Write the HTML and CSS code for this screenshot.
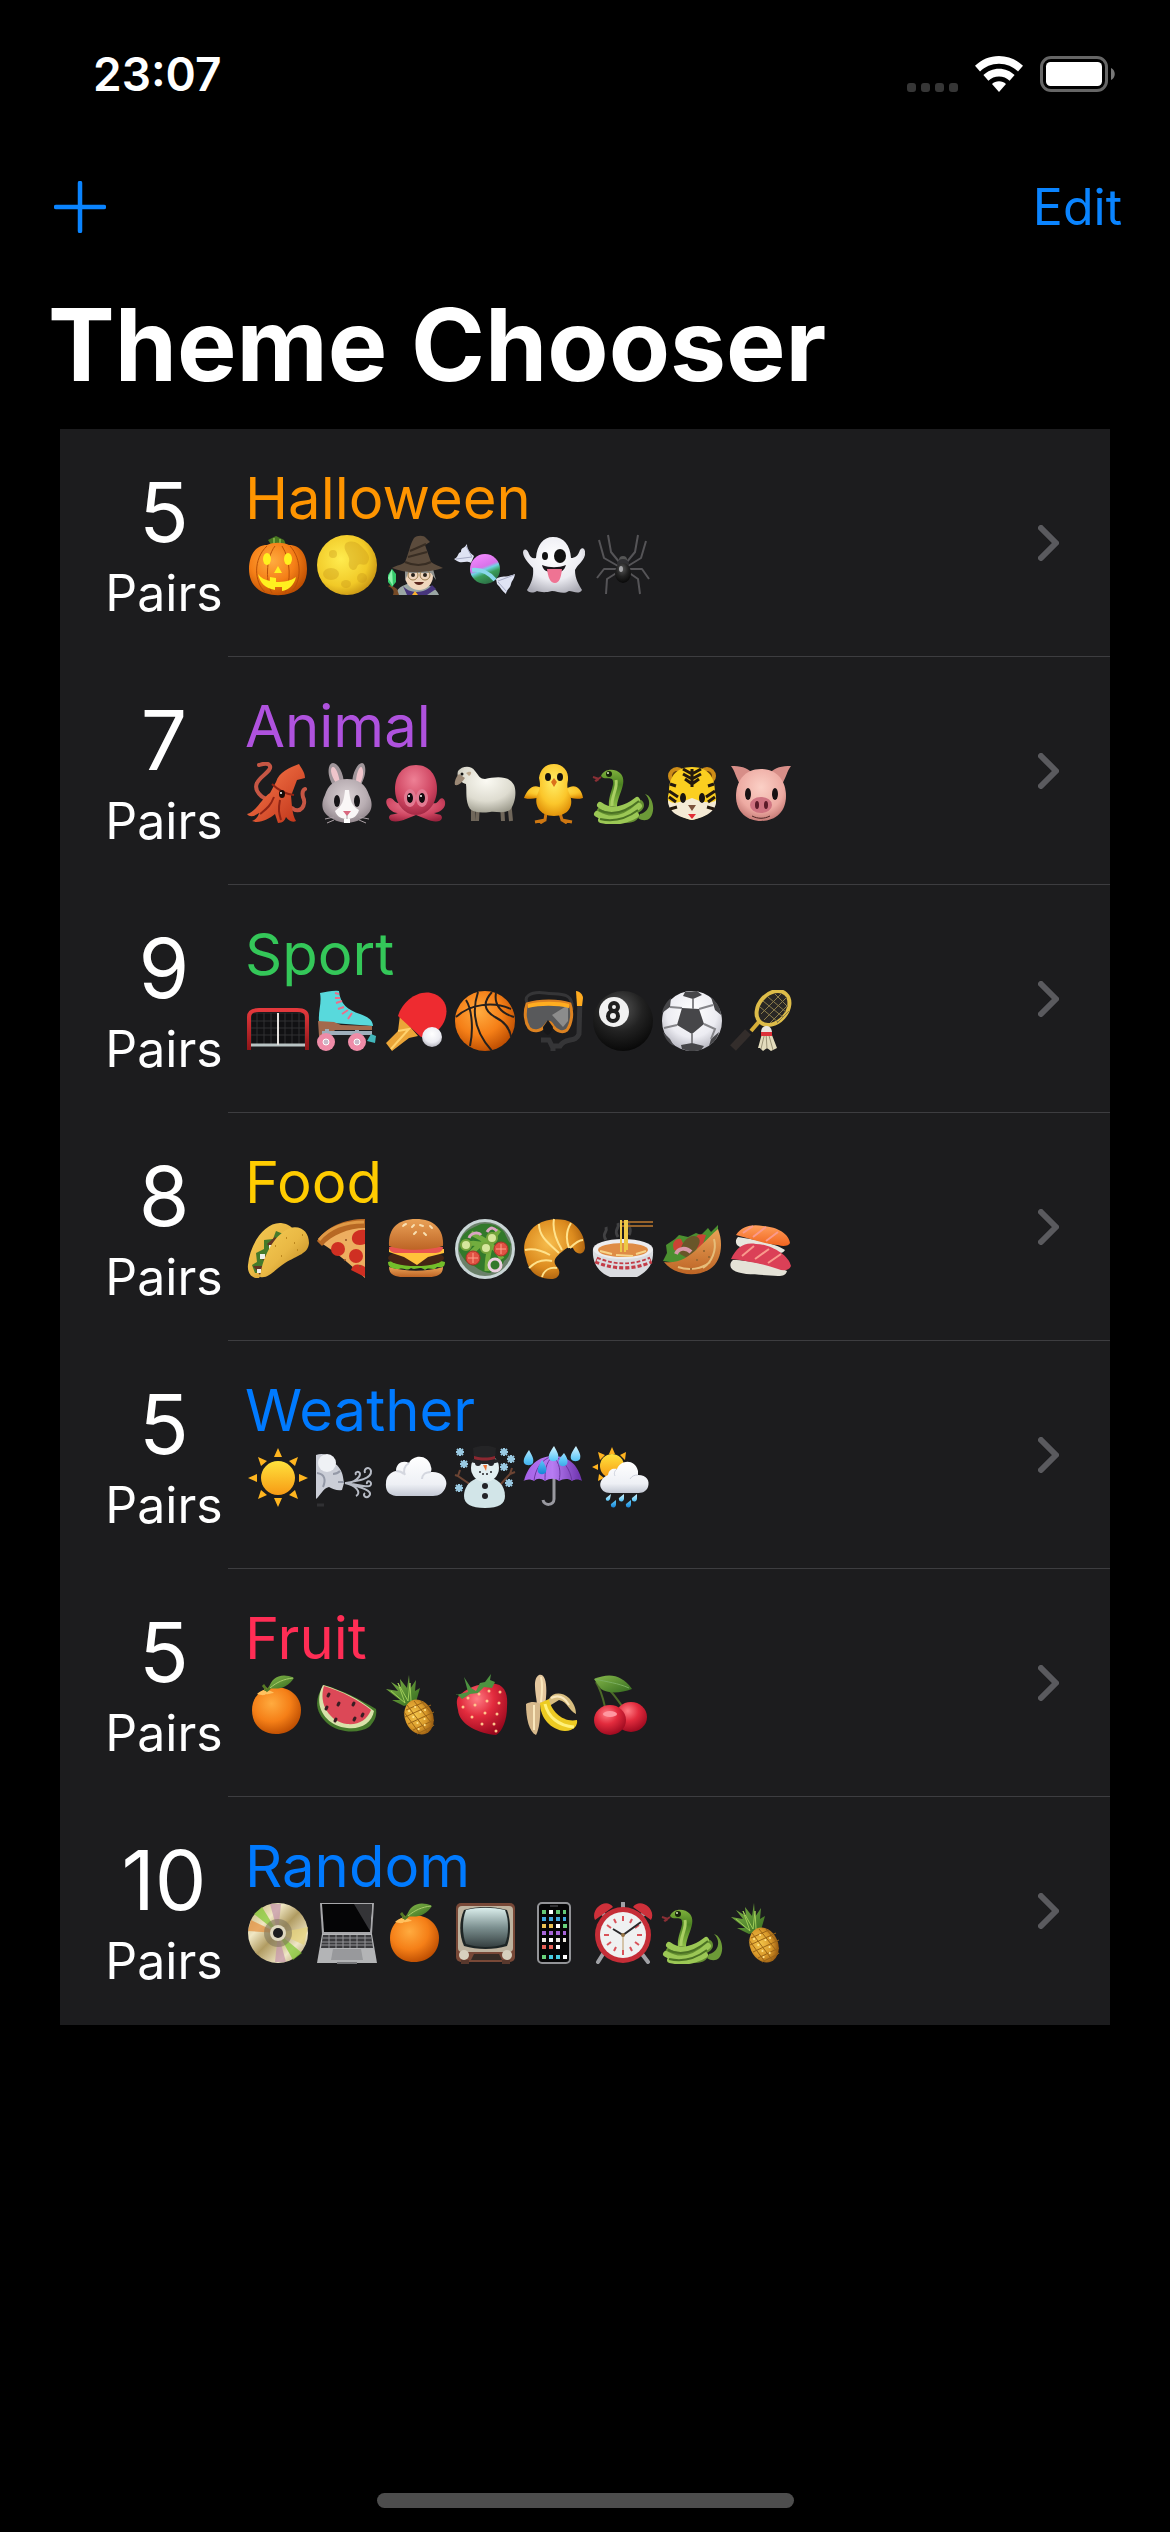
FILE: index.html
```html
<!DOCTYPE html>
<html lang="en">
<head>
<meta charset="utf-8">
<meta name="viewport" content="width=device-width, initial-scale=1">
<title>Theme Chooser</title>
<link rel="stylesheet" href="styles.css">
</head>
<body>
<svg class="defs" width="0" height="0" aria-hidden="true">
  <defs>
    <radialGradient id="g-orange" cx=".4" cy=".35" r=".7"><stop offset="0" stop-color="#ffab3f"/><stop offset=".55" stop-color="#f57f17"/><stop offset="1" stop-color="#b94a00"/></radialGradient>
    <radialGradient id="g-moon" cx=".4" cy=".4" r=".65"><stop offset="0" stop-color="#ffec4f"/><stop offset=".7" stop-color="#f1c927"/><stop offset="1" stop-color="#c79413"/></radialGradient>
    <radialGradient id="g-white" cx=".5" cy=".35" r=".7"><stop offset="0" stop-color="#fff"/><stop offset=".6" stop-color="#ececf2"/><stop offset="1" stop-color="#aaaab4"/></radialGradient>
    <linearGradient id="g-cloud" x1="0" y1="0" x2="0" y2="1"><stop offset="0" stop-color="#fff"/><stop offset=".7" stop-color="#eef0f5"/><stop offset="1" stop-color="#c3c8d4"/></linearGradient>
    <radialGradient id="g-black" cx=".45" cy=".3" r=".75"><stop offset="0" stop-color="#555"/><stop offset=".5" stop-color="#222"/><stop offset="1" stop-color="#050505"/></radialGradient>
    <linearGradient id="g-candy" x1=".2" y1="0" x2=".6" y2="1"><stop offset="0" stop-color="#f58cff"/><stop offset=".45" stop-color="#d873ea"/><stop offset=".55" stop-color="#6fd4e4"/><stop offset=".7" stop-color="#3a9c5a"/><stop offset="1" stop-color="#2b6f45"/></linearGradient>
    <linearGradient id="g-squid" x1="0" y1="0" x2="1" y2="1"><stop offset="0" stop-color="#ff8050"/><stop offset="1" stop-color="#bd3117"/></linearGradient>
    <radialGradient id="g-rabbit" cx=".5" cy=".4" r=".65"><stop offset="0" stop-color="#d9d0d3"/><stop offset=".6" stop-color="#b9aeb3"/><stop offset="1" stop-color="#8b8086"/></radialGradient>
    <radialGradient id="g-octo" cx=".45" cy=".3" r=".75"><stop offset="0" stop-color="#ee8095"/><stop offset=".6" stop-color="#d04763"/><stop offset="1" stop-color="#9c233f"/></radialGradient>
    <radialGradient id="g-wool" cx=".5" cy=".3" r=".75"><stop offset="0" stop-color="#fbfaf3"/><stop offset=".6" stop-color="#dedcd0"/><stop offset="1" stop-color="#9c9a8c"/></radialGradient>
    <radialGradient id="g-chick" cx=".5" cy=".35" r=".7"><stop offset="0" stop-color="#ffee66"/><stop offset=".6" stop-color="#fbc62b"/><stop offset="1" stop-color="#dd8a05"/></radialGradient>
    <linearGradient id="g-snake" x1="0" y1="0" x2="0" y2="1"><stop offset="0" stop-color="#7fb13c"/><stop offset=".4" stop-color="#4c8222"/><stop offset="1" stop-color="#8fbf47"/></linearGradient>
    <radialGradient id="g-pig" cx=".5" cy=".35" r=".7"><stop offset="0" stop-color="#fbd0c6"/><stop offset=".65" stop-color="#edaaa2"/><stop offset="1" stop-color="#bb6f6b"/></radialGradient>
    <linearGradient id="g-shell" x1="0" y1="0" x2="1" y2="1"><stop offset="0" stop-color="#f6cc55"/><stop offset=".5" stop-color="#e9b844"/><stop offset="1" stop-color="#b67d18"/></linearGradient>
    <linearGradient id="g-bun" x1="0" y1="0" x2="0" y2="1"><stop offset="0" stop-color="#eaa257"/><stop offset="1" stop-color="#bd6425"/></linearGradient>
    <radialGradient id="g-croissant" cx=".4" cy=".4" r=".7"><stop offset="0" stop-color="#f7bd4d"/><stop offset=".6" stop-color="#dc8b1e"/><stop offset="1" stop-color="#9a520a"/></radialGradient>
    <linearGradient id="g-sun" x1="0" y1="0" x2="0" y2="1"><stop offset="0" stop-color="#ffe23d"/><stop offset="1" stop-color="#f79a14"/></linearGradient>
    <linearGradient id="g-drop" x1="0" y1="0" x2="0" y2="1"><stop offset="0" stop-color="#d5f4ff"/><stop offset=".5" stop-color="#5cc6f7"/><stop offset="1" stop-color="#1583d6"/></linearGradient>
    <linearGradient id="g-umbrella" x1="0" y1="0" x2="1" y2="0"><stop offset="0" stop-color="#a45fe6"/><stop offset=".5" stop-color="#b77cf2"/><stop offset="1" stop-color="#6b31ab"/></linearGradient>
    <radialGradient id="g-red" cx=".4" cy=".3" r=".75"><stop offset="0" stop-color="#ff7d84"/><stop offset=".45" stop-color="#e22b3d"/><stop offset="1" stop-color="#97071d"/></radialGradient>
    <linearGradient id="g-leaf" x1="0" y1="0" x2="1" y2="1"><stop offset="0" stop-color="#86b84a"/><stop offset="1" stop-color="#346b1f"/></linearGradient>
    <radialGradient id="g-pine" cx=".4" cy=".4" r=".65"><stop offset="0" stop-color="#f3c54a"/><stop offset=".6" stop-color="#d9992a"/><stop offset="1" stop-color="#94560f"/></radialGradient>
    <linearGradient id="g-disc" x1="0" y1="0" x2="1" y2="1"><stop offset="0" stop-color="#b9a768"/><stop offset=".3" stop-color="#f0e7c4"/><stop offset=".5" stop-color="#b19c62"/><stop offset=".75" stop-color="#efe6c6"/><stop offset="1" stop-color="#9c8950"/></linearGradient>
    <linearGradient id="g-screen" x1="0" y1="0" x2="0" y2="1"><stop offset="0" stop-color="#dcefed"/><stop offset=".5" stop-color="#7d9191"/><stop offset="1" stop-color="#353f40"/></linearGradient>
    <linearGradient id="g-salmon" x1="0" y1="0" x2="0" y2="1"><stop offset="0" stop-color="#ff9f5c"/><stop offset="1" stop-color="#f0641f"/></linearGradient>
    <linearGradient id="g-net" x1="0" y1="0" x2="0" y2="1"><stop offset="0" stop-color="#e3383c"/><stop offset="1" stop-color="#8e1518"/></linearGradient>

    <symbol id="i-tangerine" viewBox="0 0 62 62">
      <path d="M5 36C5 22 16 13 29 13s25 9 25 23-10 24-25 24S5 50 5 36z" fill="url(#g-orange)"/>
      <path d="M10 20c4-4 8-3 9-7 2 4 6 4 8 6-4 0-6 2-8 1-2 2-5 1-9 0z" fill="#ffc15f"/>
      <path d="M19 17c0-3-2-5-3-6m3 6c5-3 6-7 9-9" fill="none" stroke="#567a25" stroke-width="3"/>
      <path d="M22 14C24 4 34-2 47 4c-6 9-14 12-25 10z" fill="url(#g-leaf)"/>
      <path d="M23 14C30 8 37 5 46 4" fill="none" stroke="#a9cc6b"/>
    </symbol>
    <symbol id="i-snake" viewBox="0 0 62 62">
      <path d="M9 15 3 19m4-2-6-2m6 2-3 2" stroke="#8a2f35" stroke-width="2" fill="none"/>
      <path d="M48 52c10-2 12-14 5-20 8 2 11 17 5 24-3 3-8 3-12 0z" fill="#6c9a37"/>
      <path d="M9 14C12 6 24 6 29 12c7 9-4 22-4 33l-8-1c-1-12 7-22 3-27-3-2-8 1-11-3z" fill="url(#g-snake)"/>
      <path d="M24 18c2 8-5 17-4 26" fill="none" stroke="#a9cf63" stroke-width="3"/>
      <path d="M10 44c9 4 20 3 30-5 4-4 12-2 12 4 0 4-3 6-6 8 3 6-4 10-12 10-14 1-27 0-29-8-2-5 2-9 5-9z" fill="#648f31"/>
      <path d="M8 43c12 9 27 3 37-5M5 52c13 8 28 5 42-8M9 58c12 3 25 1 35-5" stroke="#9bc755" stroke-width="6" stroke-linecap="round" fill="none"/>
      <path d="M7 48c14 7 28 1 40-9M8 57c13 3 26 0 38-9" stroke="#4b7224" stroke-width="2" fill="none"/>
      <circle cx="17" cy="12" r="3" fill="#15200a"/><circle cx="16" cy="11" r="1" fill="#d9ebbb"/>
    </symbol>
    <symbol id="i-pineapple" viewBox="0 0 62 62">
      <path d="M19 32 7 26l8 0L1 15l12 2-7-9 10 6L15 5l7 9 2-13 1 14 6-9-1 11 5-3-4 14z" fill="url(#g-leaf)"/>
      <path d="M6 17 20 29 13 9l10 18 2-18 1 18" stroke="#9fcc58" fill="none"/>
      <ellipse cx="34" cy="43" rx="14" ry="18" transform="rotate(-24 34 43)" fill="url(#g-pine)"/>
      <path d="m21 36 18-8M20 43l26-12M23 50l26-12M28 56l21-10M32 60l16-8M22 31l21 28M29 27l20 25M19 38l16 22M36 27l12 14" stroke="#9b6517" fill="none"/>
      <path d="M24 37h.1m6-4h.1m-2 10h.1m7-5h.1m-3 11h.1m7-4h.1m-6 10h.1m6-4h.1M40 36h.1" stroke="#ffe38a" stroke-width="2" stroke-linecap="round"/>
    </symbol>
  </defs>
</svg>

<div class="screen">
  <div class="status">
    <time class="clock">23:07</time>
    <div class="indicators">
      <svg class="signal" viewBox="0 0 51 9" role="img" aria-label="No signal"><g fill="#363636"><rect width="9" height="9" rx="3"/><rect x="14" width="9" height="9" rx="3"/><rect x="28" width="9" height="9" rx="3"/><rect x="42" width="9" height="9" rx="3"/></g></svg>
      <svg class="wifi" viewBox="0 0 48 36" role="img" aria-label="Wi-Fi"><path fill="#fff" d="M24 0C14.700 0 6.300 3.700 0 9.800L5 15.500C10 10.700 16.500 7.800 24 7.800s14 2.900 19 7.700L48 9.800C41.700 3.700 33.300 0 24 0zM24 12.800c-6 0-11.500 2.400-15.600 6.300L13.400 24.700c2.800-2.600 6.500-4.200 10.600-4.200s7.800 1.600 10.600 4.200l5-5.600C35.500 15.200 30 12.800 24 12.800zM24 25.300c-2.700 0-5.200 1-7 2.800L24 36l7-7.900C29.200 26.300 26.700 25.300 24 25.300z"/></svg>
      <svg class="battery" viewBox="0 0 76 36" role="img" aria-label="Battery full"><rect x="1.500" y="1.500" width="65" height="33" rx="9.500" fill="none" stroke="#666" stroke-width="3"/><rect x="6" y="6" width="56" height="24" rx="4.500" fill="#fff"/><path d="M71 12c5 2 5 10 0 12z" fill="#777"/></svg>
    </div>
  </div>

  <nav class="toolbar">
    <button class="tool" type="button" aria-label="Add theme"><svg class="plus" viewBox="0 0 52 52"><path d="M26 2v48M2 26h48" stroke="currentColor" stroke-width="4.500" stroke-linecap="round"/></svg></button>
    <button class="tool" type="button">Edit</button>
  </nav>

  <main>
    <h1 class="heading">Theme Chooser</h1>
    <ul class="themes">
      <li><a class="theme halloween" href="#halloween">
        <span class="count"><span class="number">5</span><span class="unit">Pairs</span></span>
        <span class="details">
          <span class="summary"><span class="name">Halloween</span>
          <span class="emojis">
            <svg viewBox="0 0 62 62" role="img" aria-label="Pumpkin"><path d="M24 16c1-6-2-8-3-10l8-4 8 4c2 3 1 6 4 9z" fill="#487721"/><path d="M27 4v10m6-9v9" stroke="#79a942" stroke-width="2"/><path d="M20 11c6-3 16-3 22 0 12 0 18 10 18 24s-7 21-16 24c-9 3-17 3-26 0C9 56 2 48 2 35s6-24 18-24z" fill="url(#g-orange)"/><path d="M20 12C6 25 7 48 18 58M28 12C18 25 19 50 25 59M35 12c9 14 9 37 3 47M43 12c12 13 12 36 1 46" fill="none" stroke="#b94f07"/><ellipse cx="20" cy="25" rx="4" ry="6" fill="#fff01f"/><ellipse cx="41" cy="25" rx="4" ry="6" fill="#fff01f"/><path d="m31 32-4 7h8zM11 40c3 4 7 6 12 7v-4l6 1v4c8 0 15-1 20-5-2 9-8 13-14 14v-4h-7v3C18 54 13 49 11 40z" fill="#fff01f"/></svg>
            <svg viewBox="0 0 62 62" role="img" aria-label="Full moon"><circle cx="31" cy="31" r="30" fill="url(#g-moon)"/><g fill="#c69418" opacity=".35"><path d="M30 9c8-4 13 1 17 5s8 8 5 14-9-1-11 5-10 2-8-5-8-12-3-19z"/><ellipse cx="15" cy="40" rx="8" ry="6"/><ellipse cx="30" cy="50" rx="5" ry="4"/><circle cx="46" cy="44" r="5"/><circle cx="17" cy="20" r="4"/></g></svg>
            <svg viewBox="0 0 62 62" role="img" aria-label="Mage"><path d="M10 61c3-9 11-12 21-12s20 4 23 12z" fill="#9ba7a5"/><path d="M18 52c6 8 22 8 29-1l4 4-9 6H22z" fill="#46357c"/><path d="m30 57 3 4h-6z" fill="#f9b32c"/><ellipse cx="34" cy="42" rx="14" ry="14" fill="#f0d6bd"/><path d="M20 35c8-4 20-4 28 0l3 11-5-7H23l-3 8z" fill="#8f928f"/><g fill="none" stroke="#997c4d"><circle cx="28" cy="41" r="5"/><circle cx="40" cy="41" r="5"/></g><circle cx="28" cy="41" r="2" fill="#29231c"/><circle cx="40" cy="41" r="2" fill="#29231c"/><path d="M29 48h10c-2 4-8 4-10 0z" fill="#5a251d"/><path d="M7 34c5-3 10-3 13-6 4-9 5-18 9-24 3-3 10-3 12 0l4 4-5 3 6 17c4 3 9 4 12 6-15 5-37 6-51 0z" fill="#5b4b3c"/><path d="M20 28c9 4 18 4 26 0M25 17l16-7M23 23l19-5" stroke="#382d23" stroke-width="2" fill="none"/><path d="M8 61c2-5-1-7-5-9l3-1 6 4 2 6z" fill="#754925"/><path d="m7 35 4 5v8l-4 5-4-5v-7z" fill="#35c96b"/><path d="m7 35 1 17-5-8z" fill="#8bf3ac"/></svg>
            <svg viewBox="0 0 62 62" role="img" aria-label="Candy"><path d="M13 10c0 5 2 8 7 12l-3 7c-5-3-9 1-14-2L0 25c5-2 3-6 7-7 0-5 3-3 6-8zM42 45c5-4 10-1 19-5-1 6-3 6-4 10-1 5-4 5-5 10-4-3-5-6-9-10z" fill="#dfe3f3"/><path d="m2 25 16-2-6-11m32 35 16-6m-16 7 9 10" stroke="#a6aac4" fill="none"/><circle cx="31" cy="35" r="15" fill="url(#g-candy)"/><path d="M18 36c9-1 17 3 23 10" stroke="#8ad8ec" stroke-width="4" fill="none"/></svg>
            <svg viewBox="0 0 62 62" role="img" aria-label="Ghost"><path d="M30 3c11 0 17 8 18 21 4 0 7-2 9-8 3-4 6 0 5 5-2 7-7 9-10 15 0 9 4 15 7 20-3 5-9 1-13 1-6 4-11 0-17 0-7 2-12 1-15 0-5 3-9 1-10-1C8 50 11 43 10 34 5 29 0 23 0 18c1-5 5-2 6 2 2 4 4 5 7 4C14 11 20 3 30 3z" fill="url(#g-white)"/><ellipse cx="22" cy="22" rx="3" ry="4" fill="#111"/><ellipse cx="37" cy="22" rx="6" ry="7" fill="#111"/><path d="M19 31c8 3 16 3 24 0-2 6-5 7-7 7H26c-4-1-6-3-7-7z" fill="#191519"/><path d="M24 35h15c-1 9-3 14-7 14-5 0-7-6-8-14z" fill="#ef7393"/></svg>
            <svg viewBox="0 0 62 62" role="img" aria-label="Spider"><g fill="none" stroke="#555457" stroke-width="2" stroke-linejoin="round"><path d="M28 29 19 18 16 1M26 32 12 24 7 6M26 35l-14 0-7 9M26 38l-11 7-1 15M34 29l9-11 3-17M36 32l13-8 5-17M36 35l14 0 7 10M36 38l10 7 2 15"/></g><circle cx="31" cy="26" r="4" fill="#555"/><ellipse cx="31" cy="30" rx="6" ry="5" fill="#303033"/><ellipse cx="31" cy="39" rx="8" ry="10" fill="url(#g-black)"/><ellipse cx="29" cy="35" rx="2" ry="3" fill="#a7a7aa"/></svg>
          </span></span>
          <svg class="chevron" viewBox="0 0 21 36" aria-hidden="true"><path d="m3 3 15 15L3 33"/></svg>
        </span></a></li>

      <li><a class="theme animal" href="#animal">
        <span class="count"><span class="number">7</span><span class="unit">Pairs</span></span>
        <span class="details">
          <span class="summary"><span class="name">Animal</span>
          <span class="emojis">
            <svg viewBox="0 0 62 62" role="img" aria-label="Squid"><path d="M26 38C13 38 7 27 10 21c3-7 15-12 13-17-2-4-7-2-11-1M45 46c8 7 15-3 11-11-1-4 0-7 2-8" fill="none" stroke="#c65644" stroke-width="4" stroke-linecap="round"/><path d="M52 2c2 4 6 8 6 14l-8 2-6 16c1 9 1 18 5 25-4 2-8-1-10-4-1 3-3 6-8 6l-3-9C22 57 12 62 5 59c4-1 7-6 7-8-4 3-9 5-12 1 9-2 15-16 23-21l6-11C32 10 42 6 52 2z" fill="url(#g-squid)"/><path d="M25 22c7 7 13 10 22 11m-20 2c-4 10-8 12-14 17M33 38c-2 10-1 13 1 20" fill="none" stroke="#8f2415" stroke-width="2"/><ellipse cx="35" cy="32" rx="3" ry="4" fill="#180c09"/><circle cx="34" cy="31" r="1" fill="#fff"/></svg>
            <svg viewBox="0 0 62 62" role="img" aria-label="Rabbit"><path d="M18 25C10 13 12 1 17 1s11 10 11 22M36 23C36 10 42 1 46 1s6 12-3 25" fill="#a0969b"/><path d="M20 21C14 12 14 5 17 5s6 8 7 16M40 21c0-9 3-16 5-16s4 8-1 17" fill="#efc5cb"/><path d="M31 17c12 0 19 6 22 16 6 12 1 20-8 24-8 5-20 5-28 0C8 53 3 45 9 33c3-10 10-16 22-16z" fill="url(#g-rabbit)"/><path d="M29 28h4c1 11 3 16 10 20-2 7-7 9-12 9s-10-2-12-8c7-5 9-10 10-21z" fill="#faf7f7"/><ellipse cx="21" cy="39" rx="3" ry="6" fill="#161417"/><ellipse cx="41" cy="39" rx="3" ry="6" fill="#161417"/><path d="M27 49h8l-4 5z" fill="#d9687f"/><path d="M31 53v4m-13-2-9 2m9 1-7 3m32-6 10 2m-10 1 7 3" stroke="#aaa0a5"/><path d="M28 57h6v4h-6z" fill="#fff"/></svg>
            <svg viewBox="0 0 62 62" role="img" aria-label="Octopus"><path d="M16 41C9 42 9 36 5 36S0 40 3 45c3 5 8 6 10 6-4 2-9 0-9 5 1 5 11 4 17 1l10-4 10 4c6 3 15 4 16-1 0-5-5-3-8-5 5 0 10-4 11-8 1-6-3-8-5-6-3 3-2 5-9 4z" fill="url(#g-octo)"/><path d="M31 3c14 0 21 11 21 24 0 14-9 26-21 26S10 41 10 27C10 14 17 3 31 3z" fill="url(#g-octo)"/><g fill="#e27991"><ellipse cx="25" cy="36" rx="6" ry="9"/><ellipse cx="37" cy="36" rx="6" ry="9"/></g><g fill="#110b0e"><ellipse cx="25" cy="36" rx="3" ry="5"/><ellipse cx="37" cy="36" rx="3" ry="5"/></g><circle cx="24" cy="34" r="1" fill="#fff"/><circle cx="36" cy="34" r="1" fill="#fff"/></svg>
            <svg viewBox="0 0 62 62" role="img" aria-label="Ewe"><path d="M19 42v17m5-17-1 17m25-17 1 17m6-21 2 21" stroke="#6f665a" stroke-width="4"/><path d="M4 9c4-5 13-6 17 0 4 5 5 8 10 8 10-2 24-4 29 6 3 7 1 19-4 25-7 4-14 1-20 2-8 1-15 1-20-3-5-8-3-17-4-25-5-1-10-6-8-13z" fill="url(#g-wool)"/><path d="M5 12c-3 3-5 8-4 11 4 1 7-3 10-7z" fill="#9b8875"/><path d="M12 11c5-3 7 0 3 3z" fill="#bea98f"/><circle cx="8" cy="12" r="1.500" fill="#111"/></svg>
            <svg viewBox="0 0 62 62" role="img" aria-label="Baby chick"><path d="m23 51-1 7-10 2m10-2-5 3m20-10 2 7 10 2m-10-2 5 3" stroke="#ce7712" stroke-width="3" fill="none"/><path d="M20 27C10 20 4 28 1 36c8 2 14 0 17-2m25-7c10-7 16 1 17 9-7 2-13 0-16-2" fill="url(#g-chick)"/><path d="M31 2c9 0 15 7 14 16-1 5-1 7 1 13 6 12 0 23-15 23S10 42 15 31c3-7 2-10 1-15C17 8 22 2 31 2z" fill="url(#g-chick)"/><ellipse cx="25" cy="15" rx="3" ry="4" fill="#16110d"/><ellipse cx="37" cy="15" rx="3" ry="4" fill="#16110d"/><path d="m31 16 3 4-3 5-3-5z" fill="#dc711b"/></svg>
            <svg viewBox="0 0 62 62" role="img" aria-label="Snake"><use href="#i-snake"/></svg>
            <svg viewBox="0 0 62 62" role="img" aria-label="Tiger face"><circle cx="16" cy="14" r="9" fill="#cd8c17"/><circle cx="46" cy="14" r="9" fill="#cd8c17"/><circle cx="16" cy="14" r="5" fill="#68400b"/><circle cx="46" cy="14" r="5" fill="#68400b"/><path d="M31 5c17 0 23 11 23 25 5 16-7 24-23 28C15 54 3 45 8 30 8 16 14 5 31 5z" fill="#fbcf20"/><path d="M7 38c5 5 11 2 16 1l8-3 8 3c6 1 12 3 16-1 1 11-10 17-24 20C17 55 7 50 7 38z" fill="#f4ead5"/><path d="M31 7v18m0-13-9-5m9 10-9-5m9 10-7-5m7-5 9-5m-9 10 9-5m-9 10 7-5M8 29l9 6m-9 0 7 5m39-11-9 6m9 0-7 5M9 22l6 2m38-2-6 2M9 47l7-2m37 2-7-2" stroke="#24190e" stroke-width="3" fill="none"/><ellipse cx="22" cy="36" rx="3" ry="5" fill="#191411"/><ellipse cx="41" cy="36" rx="3" ry="5" fill="#191411"/><path d="M27 43h8l-4 6z" fill="#7b513d"/><path d="M27 52h8l-4 5z" fill="#e12c34"/></svg>
            <svg viewBox="0 0 62 62" role="img" aria-label="Pig face"><path d="M1 4c9 0 16 1 21 7L10 22C6 16 5 9 1 4zm60 0c-9 0-16 1-21 7l12 11c4-6 5-13 9-18z" fill="#d78e88"/><path d="M31 7c17 0 25 13 25 27 0 16-11 25-25 25S6 50 6 34C6 20 14 7 31 7z" fill="url(#g-pig)"/><ellipse cx="18" cy="32" rx="3" ry="6" fill="#171113"/><ellipse cx="45" cy="32" rx="3" ry="6" fill="#171113"/><ellipse cx="31" cy="43" rx="11" ry="8" fill="#cf7381"/><ellipse cx="27" cy="43" rx="2" ry="4" fill="#5b1b29"/><ellipse cx="36" cy="43" rx="2" ry="4" fill="#5b1b29"/><path d="M22 54c6 3 12 3 18 0" stroke="#4c2424" stroke-width="1" fill="none"/></svg>
          </span></span>
          <svg class="chevron" viewBox="0 0 21 36" aria-hidden="true"><path d="m3 3 15 15L3 33"/></svg>
        </span></a></li>

      <li><a class="theme sport" href="#sport">
        <span class="count"><span class="number">9</span><span class="unit">Pairs</span></span>
        <span class="details">
          <span class="summary"><span class="name">Sport</span>
          <span class="emojis">
            <svg viewBox="0 0 62 62" role="img" aria-label="Goal net"><path d="M5 24h52v32H5z" fill="#111113"/><path d="M10 23v32m7-32v32m7-32v32m14-32v32m7-32v32m7-32v32M4 31h54M4 38h54M4 45h54" stroke="#303033"/><path d="M4 55h54" stroke="#b9c4c4" stroke-width="3"/><path d="M31 23v32" stroke="#e5e2df" stroke-width="2"/><path d="M2 60V27c0-5 4-7 10-7h38c6 0 10 2 10 7v33" stroke="url(#g-net)" stroke-width="4" fill="none"/></svg>
            <svg viewBox="0 0 62 62" role="img" aria-label="Roller skate"><path d="M4 3c7-1 13-3 19-2 1 13 9 19 21 23 9 3 13 7 13 12L3 32C2 21 6 13 4 3z" fill="#58d9dc"/><path d="m2 31 16 1 7 3 31 1v4H19l-5 6H3z" fill="#a3694d"/><path d="M6 43h50M11 39v10m30-9v8" stroke="#9faebb" stroke-width="4"/><path d="m55 44 5 2-1 7-8-2z" fill="#41b6bb"/><g fill="#ef8ca8"><circle cx="10" cy="52" r="9"/><circle cx="41" cy="52" r="9"/></g><g fill="#c9b9c8" stroke="#fff"><circle cx="10" cy="52" r="3"/><circle cx="41" cy="52" r="3"/></g><path d="m19 3 4 1m-4 4 5 0m-4 5 6-2m-4 8 6-2m-2 7 6-4m0 9 4-6" stroke="#e9708b" stroke-width="2"/></svg>
            <svg viewBox="0 0 62 62" role="img" aria-label="Ping pong"><path d="m15 25 18 21-9 2L7 61 1 53l12-12z" fill="#eba538"/><path d="m13 41 11-2L6 59" fill="none" stroke="#ffd16c" stroke-width="2"/><path d="M13 26C17 12 32 0 46 3c14 3 19 16 13 29-4 8-12 15-23 15z" fill="#ee2b30"/><circle cx="47" cy="47" r="10" fill="url(#g-white)"/></svg>
            <svg viewBox="0 0 62 62" role="img" aria-label="Basketball"><circle cx="31" cy="31" r="30" fill="url(#g-orange)"/><path d="M2 27c14-13 37-16 55-8M24 2c-6 18-5 38 14 59M12 10c7 11 7 33 4 46M38 2c-9 10-9 18 3 25 10 5 15 12 16 20M42 3c-2 11 4 20 18 24" fill="none" stroke="#26201d" stroke-width="2"/></svg>
            <svg viewBox="0 0 62 62" role="img" aria-label="Diving mask"><path d="M7 16C-3 7 8 1 22 3s25-1 27 11v6" stroke="#353537" stroke-width="3" fill="none"/><path d="m57 9-1 35c-3 9-14 3-19 12h-8l-3-6h-8m12 5v6" stroke="#353537" stroke-width="5" fill="none"/><path d="M53 1c4 0 7 4 7 7l-1 8h-5z" fill="#ffab20"/><path d="M4 14c12-4 32-4 43 0 3 8 2 19-3 26-4 3-10 2-14-4-3-5-5-5-8 0-5 6-12 6-16 2-4-6-5-16-2-24z" fill="#58595b" stroke="#dc8221" stroke-width="3"/><path d="m29 25 16-10v16l-5 6z" fill="#8c8c8c"/><path d="M5 14c12-3 30-3 41 0v4c-12-3-29-3-41 0z" fill="#ffad20"/><path d="m20 37 5-7 5 7c-1 4-2 6-5 8-3-1-5-4-5-8z" fill="#171719"/></svg>
            <svg viewBox="0 0 62 62" role="img" aria-label="Eight ball"><circle cx="31" cy="31" r="30" fill="url(#g-black)"/><circle cx="22" cy="22" r="15" fill="#f1f1f1"/><g fill="none" stroke="#202020" stroke-width="4"><ellipse cx="22" cy="17" rx="4" ry="4"/><ellipse cx="21" cy="26" rx="5" ry="5"/></g></svg>
            <svg viewBox="0 0 62 62" role="img" aria-label="Soccer ball"><circle cx="31" cy="31" r="30" fill="url(#g-white)"/><path d="m21 18 17 1 5 15-12 10-15-9zM24 2l12-1 5 4-9 4-10-3zM50 7c7 6 10 13 10 18l-6-5zM1 23c1-6 5-12 9-15l-1 9zM2 42l7 7 4 7C7 53 4 48 2 42zM20 55l11-2 12 3-3 4c-8 2-14 1-19-1zM50 49l8-7c-2 7-5 10-10 14z" fill="#464649"/><path d="m21 18-12-1m29 2 14-4M43 34l11 5-4 10m-19-5v9m-15-18L3 38m29-29v10" fill="none" stroke="#858589" stroke-width="2"/></svg>
            <svg viewBox="0 0 62 62" role="img" aria-label="Badminton"><path d="m21 41 12-14" stroke="#d6ae37" stroke-width="4"/><path d="M18 42 3 58" stroke="#332d2b" stroke-width="8"/><ellipse cx="43" cy="18" rx="14" ry="19" transform="rotate(42 43 18)" fill="#292725" stroke="#ddbc49" stroke-width="4"/><path d="m30 17 18 15M33 11l20 16M38 7l18 15M45 4l13 13M31 24 51 4M34 30 57 7M40 33l18-18M47 33l12-12" stroke="#8b7c4b"/><path d="m28 58 5-18h7l7 18-6 3-4-3-4 3-3-3z" fill="#e3dcbd"/><path d="m31 59 4-17m2 17-1-17m7 18-5-18" stroke="#9c9478"/><path d="M31 43c0-6 3-7 6-7s5 3 5 7z" fill="#e9e7e2"/><path d="M31 42h11v4H31z" fill="#dd323a"/></svg>
          </span></span>
          <svg class="chevron" viewBox="0 0 21 36" aria-hidden="true"><path d="m3 3 15 15L3 33"/></svg>
        </span></a></li>

      <li><a class="theme food" href="#food">
        <span class="count"><span class="number">8</span><span class="unit">Pairs</span></span>
        <span class="details">
          <span class="summary"><span class="name">Food</span>
          <span class="emojis">
            <svg viewBox="0 0 62 62" role="img" aria-label="Taco"><path d="M1 47C3 25 18 4 34 5c8 1 13 5 12 9L12 60C5 61 0 55 1 47z" fill="url(#g-shell)"/><path d="m8 55-3-8 5-3-1-9 8-4 0-9 9-1 3-8 10 4-20 38z" fill="#447a2b"/><path d="m6 48 7 9 8-11-6-5 10-10-5-5 8-7 5 4-13 25" fill="#613524"/><path d="M13 36h5v5h-5zm9-9h5v5h-5zm-3 17h5v4h-5zm-9 7h4v4h-4z" fill="#eef0eb"/><path d="M13 59C16 37 28 16 43 10c12-3 19 5 19 15-1 11-11 12-24 20-10 6-16 16-25 14z" fill="url(#g-shell)"/><path d="M28 28h1m10-8h1m7 5h1M34 38h1m15-6h1m4-15h1" stroke="#bd881e" stroke-width="2"/></svg>
            <svg viewBox="0 0 62 62" role="img" aria-label="Pizza"><path d="M5 25C15 14 31 7 49 6v54C35 47 20 34 5 25z" fill="#edae60"/><path d="M1 23C10 9 28 1 49 1v9C32 10 16 17 6 28z" fill="#b76824"/><path d="M3 22C13 10 29 4 48 4" stroke="#df9946" stroke-width="3" fill="none"/><path d="M35 52c2-6 7-7 14-3v10z" fill="#cf2f22"/><g fill="#cf2f22"><circle cx="22" cy="31" r="7"/><circle cx="40" cy="38" r="7"/><path d="M49 12v14c-8 3-14-1-13-7 1-5 6-8 13-7z"/></g><g fill="#925026"><circle cx="30" cy="22" r="1"/><circle cx="29" cy="42" r="1"/><circle cx="44" cy="48" r="1"/></g></svg>
            <svg viewBox="0 0 62 62" role="img" aria-label="Hamburger"><path d="M4 49c18 5 36 5 54 0 0 7-5 10-14 10H18C9 59 4 56 4 49z" fill="url(#g-bun)"/><path d="M3 44c16-5 40-5 57 0 0 5-3 6-8 5-4 5-7-1-12 3-6-5-9 1-14-2-5 4-6-1-12 1-6 0-11-1-11-7z" fill="#73be2a"/><ellipse cx="31" cy="40" rx="28" ry="8" fill="#442515"/><path d="M4 31h55v4L43 39l-11 8-13-8-15-5z" fill="#ffc13a"/><path d="M4 29h54c0 5-5 6-9 6H13c-6 0-9-2-9-6z" fill="#e95450"/><path d="M4 28C3 10 13 1 31 1s28 10 27 27c-16 5-40 5-54 0z" fill="url(#g-bun)"/><path d="m18 8 3-2m6 3 2-2m6 0 3 1m7 0 2 2m-18 6 2-2m8 1 2 2m-22-10 2-1" stroke="#f8dfb1" stroke-width="2" stroke-linecap="round"/></svg>
            <svg viewBox="0 0 62 62" role="img" aria-label="Green salad"><circle cx="31" cy="31" r="30" fill="#c9d5d6"/><circle cx="31" cy="31" r="27" fill="#6a8069"/><path d="M10 16c6-6 11-7 17-10 8-1 15 0 20 5 5 3 5 10 10 15-2 5 1 11-7 17-2 7-9 8-14 12-7 0-13-5-16-7-7-1-11-8-15-15 1-6 0-12 5-17z" fill="#32792b"/><path d="M14 40c6-10 12-14 22-18M17 15c12 6 23 11 31 26M33 53c0-16 3-30 12-41M7 28c9-4 18-3 24 0" stroke="#72ad3e" stroke-width="5" fill="none"/><path d="M15 20c2-6 10-6 12-3m6-3c4-6 7-4 10-1" stroke="#dba5c4" stroke-width="3" fill="none"/><g fill="#e05243" stroke="#a93128"><circle cx="19" cy="40" r="7"/><circle cx="47" cy="31" r="7"/></g><path d="m19 35v10m-5-5h10m23-14v10m-5-5h10" stroke="#ffa28d"/><g fill="#d6e69c" stroke="#75a43c" stroke-width="2"><circle cx="12" cy="27" r="5"/><circle cx="32" cy="30" r="5"/><circle cx="38" cy="20" r="5"/></g><circle cx="41" cy="47" r="6" fill="none" stroke="#ead0df" stroke-width="3"/></svg>
            <svg viewBox="0 0 62 62" role="img" aria-label="Croissant"><path d="M3 21C8 6 24-1 42 2c12 3 20 15 20 28-1 7-8 7-11 2-2-5-6-3-11 1-9 7-11 11-5 17 3 5 1 11-7 11C13 61 5 52 3 40c-3-8-2-14 0-19z" fill="url(#g-croissant)"/><path d="M2 32c8-2 16 0 25 5M16 6c0 12 8 18 20 29M31 1c-2 11 2 21 8 31M48 5c-5 8-5 17-2 25M60 22c-5 0-9 4-13 8M6 50c7-7 15-9 23-7M19 59c2-7 8-10 15-9" fill="none" stroke="#ffe28b" stroke-width="2"/></svg>
            <svg viewBox="0 0 62 62" role="img" aria-label="Noodles"><path d="M14 22c-5-7 2-7 0-13m12 10c-5-8 2-8 0-14m11 12c4-6-2-9 0-13" stroke="#414143" stroke-width="3" fill="none"/><path d="M29 3h32v2H29zm0 4h32v2H29z" fill="#96622b"/><path d="M1 31h60c1 15-5 22-16 28H18C5 54 0 43 1 31z" fill="#dadce0"/><ellipse cx="31" cy="31" rx="30" ry="10" fill="#ececef"/><ellipse cx="31" cy="32" rx="25" ry="7" fill="#df8c46"/><path d="M29 2v32m4-32v32m2-32v30" stroke="#edc947" stroke-width="2"/><path d="m8 33 12 3m4 1 17 1m3-2 10-3" stroke="#f7d58b" stroke-width="2"/><path d="M4 42c19 8 37 8 55 0" stroke="#c33c47" stroke-width="7" fill="none" stroke-dasharray="4 2"/><path d="M5 42c18 7 36 7 53 0" stroke="#dadce0" stroke-width="2" fill="none"/></svg>
            <svg viewBox="0 0 62 62" role="img" aria-label="Stuffed flatbread"><path d="m2 43 4-8-1-8 9-6 4-4 9 2 8-4 5 2 7-7 3 4 7-7v15L22 46z" fill="#4b9030"/><path d="M13 32c-3-8 2-12 7-11l7 15zM34 26c0-9 3-11 11-9l-7 21z" fill="#cc4334"/><path d="M19 36c0-10 7-18 14-18 7 1 7 6 3 12l-8 11z" fill="#695629"/><path d="M15 36c2-6 10-7 15-2" stroke="#d898a8" stroke-width="4" fill="none"/><path d="M57 11c6 15 3 33-8 40-14 9-36 6-46-7 14 2 25-5 34-14C45 23 51 16 57 11z" fill="url(#g-bun)"/><path d="M53 21c3 11-2 23-11 29M17 49c11 4 24 2 32-5" fill="none" stroke="#e6bd7a" stroke-width="2"/><path d="M35 42h2m5-9h2m3 6h2M29 51h2" stroke="#9e6830" stroke-width="2"/></svg>
            <svg viewBox="0 0 62 62" role="img" aria-label="Sushi"><path d="M8 19c14 2 37 6 47 13-2 4-8 4-13 2-14 2-29-2-35-7-2-3-1-6 1-8z" fill="#e7e6dd"/><path d="M6 17C12 8 22 6 33 8c15 1 26 8 27 17-1 3-7 4-12 2-13-1-30-7-42-10z" fill="url(#g-salmon)"/><path d="M3 42c17 0 43 6 54 11-1 4-4 5-9 5-17-2-36 0-45-6-4-3-3-8 0-10z" fill="#e4e2d7"/><path d="M1 41C7 29 14 24 26 26c14 0 33 11 35 22-2 5-8 5-13 3-14-5-30-8-47-10z" fill="#db4057"/><path d="m13 15 10-7m0 11 13-10m0 14 12-9m-36 24 12-10m1 13 14-10m-1 14 13-9" stroke="#f99a8d" stroke-width="2"/></svg>
          </span></span>
          <svg class="chevron" viewBox="0 0 21 36" aria-hidden="true"><path d="m3 3 15 15L3 33"/></svg>
        </span></a></li>

      <li><a class="theme weather" href="#weather">
        <span class="count"><span class="number">5</span><span class="unit">Pairs</span></span>
        <span class="details">
          <span class="summary"><span class="name">Weather</span>
          <span class="emojis">
            <svg viewBox="0 0 62 62" role="img" aria-label="Sun"><path d="m31 2 4 9h-8zM51 11l-3 9-6-5zM61 32l-9 4v-8zM51 53l-9-4 6-5zM31 61l-4-9h8zM11 53l3-9 6 5zM1 32l9-4v8zM11 11l9 4-6 5z" fill="#ffb51f"/><circle cx="31" cy="32" r="17" fill="url(#g-sun)"/></svg>
            <svg viewBox="0 0 62 62" role="img" aria-label="Wind face"><path d="M0 9c9-3 17 2 18 8 5 3 8 8 9 14l1 6-2 7c-5 1-9-1-13-3-6 1-8 8-13 12z" fill="#cbced7"/><circle cx="11" cy="17" r="9" fill="#eff1f5"/><path d="M17 28c2 0 5-1 7-3M1 27c8 1 9 7 6 14m15-5h6" fill="none" stroke="#9499a7" stroke-width="2"/><path d="M29 37c10 0 15-6 15-9s-6-3-4 1M29 37c13-2 27-4 26-12-1-5-8-3-6 2M29 37c13 1 27 7 26 0-1-3-5-2-4 1M29 37c16 4 29 8 24 13-3 3-7-1-4-3M29 37c11 2 17 10 11 13" fill="none" stroke="#b7bbc5" stroke-width="2"/><path d="M1 59h7" stroke="#303033" stroke-width="3"/></svg>
            <svg viewBox="0 0 62 62" role="img" aria-label="Cloud"><path d="M11 25c0-8 7-11 13-8 4-9 20-9 22 4 1 2 0 4 0 5 11-1 17 7 15 14-2 7-7 10-13 10H14C5 50 0 46 1 37c0-6 4-11 10-12z" fill="url(#g-cloud)"/><path d="M24 17c-5 3-6 8-4 12m26-3c-7 0-9 4-9 7M11 25c3 0 6 1 8 3" fill="none" stroke="#d4d7df" stroke-width="2"/></svg>
            <svg viewBox="0 0 62 62" role="img" aria-label="Snowman"><path d="m17 39-13-9 2-6m-2 6-3-1m45 10 10-11 2-6m-2 6 5-2" fill="none" stroke="#6c4433" stroke-width="2"/><path d="M31 31c13 0 20 9 20 19 0 8-6 12-20 12S10 58 10 50c0-10 8-19 21-19z" fill="#d2e5e8"/><circle cx="31" cy="22" r="14" fill="#e3eff1"/><path d="M19 2c8-3 16-3 23 0l-1 11 6 2c-6 4-26 4-32 0l5-2z" fill="#242426"/><path d="M20 10c8 2 14 2 21 0v3c-8 2-14 2-21 0z" fill="#8b2730"/><g fill="#232327"><circle cx="24" cy="17" r="3"/><circle cx="37" cy="17" r="3"/><circle cx="31" cy="40" r="3"/><circle cx="31" cy="50" r="3"/><circle cx="26" cy="26" r="1"/><circle cx="29" cy="28" r="1"/><circle cx="33" cy="28" r="1"/><circle cx="37" cy="26" r="1"/></g><path d="m29 19 4 0-1 6z" fill="#ed7435"/><g stroke="#9acae3" stroke-width="2"><path d="M6 2v8M2 6h8M3 3l6 6m0-6L3 9M10 14v8m-4-4h8m-7-3 6 6m0-6-6 6M5 38v8m-4-4h8m-7-3 6 6m0-6-6 6M50 2v8m-4-4h8m-7-3 6 6m0-6-6 6M57 9v8m-4-4h8m-7-3 6 6m0-6-6 6M50 17v8m-4-4h8m-7-3 6 6m0-6-6 6M55 33v8m-4-4h8m-7-3 6 6m0-6-6 6"/></g></svg>
            <svg viewBox="0 0 62 62" role="img" aria-label="Umbrella with rain"><path d="M31 32v21c0 7-10 7-11 1" fill="none" stroke="#9999a0" stroke-width="3"/><path d="M1 35C5 19 16 10 30 10c15 0 25 8 29 25-3-2-7-2-10 0-4-3-9-2-13 0-4-3-9-3-14 0-4-3-8-3-11 0-3-2-7-2-11 0z" fill="url(#g-umbrella)"/><path d="M30 10c-8 7-8 16-8 25m8-25c7 7 8 16 6 25M30 10C18 13 12 24 11 35m19-25c11 4 17 13 19 25" fill="none" stroke="#6a37a0"/><g fill="url(#g-drop)"><path d="M6 4c4 7 5 9 4 13-2 3-7 3-9 0-1-4 1-7 5-13zM31 0c4 7 5 9 4 13-2 3-7 3-9 0-1-4 1-7 5-13zM53 0c4 7 5 9 4 13-2 3-7 3-9 0-1-4 1-7 5-13zM19 14c4 6 5 9 4 12-2 3-6 3-8 0-1-4 1-6 4-12zM41 7c4 6 4 8 3 11-2 3-6 3-8 0-1-4 1-6 5-11z"/></g></svg>
            <svg viewBox="0 0 62 62" role="img" aria-label="Sun behind rain cloud"><path d="m20 1 3 7h-6zM34 6l-1 8-5-5zM6 6l7 3-5 5zM0 21l6-3v6zM6 35l1-7 5 4z" fill="#ffb31f"/><circle cx="20" cy="20" r="12" fill="url(#g-sun)"/><path d="M16 29c1-6 5-7 9-6 3-9 18-11 21 2v4c9 0 12 6 10 12-2 5-6 6-11 6H18C7 47 4 34 16 29z" fill="url(#g-cloud)"/><path d="M25 23c-3 2-3 5-2 7m23-1c-4 0-6 1-8 4" fill="none" stroke="#ccd0dc"/><g fill="url(#g-drop)"><path d="m19 48-5 4c-1 3 3 4 4 1zM32 48l-5 4c-1 4 4 5 5 1zM45 48l-5 4c-1 4 4 5 5 1zM24 54l-5 4c-1 4 4 5 5 1zM39 54l-5 4c-1 4 4 5 5 1z"/></g></svg>
          </span></span>
          <svg class="chevron" viewBox="0 0 21 36" aria-hidden="true"><path d="m3 3 15 15L3 33"/></svg>
        </span></a></li>

      <li><a class="theme fruit" href="#fruit">
        <span class="count"><span class="number">5</span><span class="unit">Pairs</span></span>
        <span class="details">
          <span class="summary"><span class="name">Fruit</span>
          <span class="emojis">
            <svg viewBox="0 0 62 62" role="img" aria-label="Tangerine"><use href="#i-tangerine"/></svg>
            <svg viewBox="0 0 62 62" role="img" aria-label="Watermelon"><path d="M8 11c20 6 35 14 52 24 1 7-1 12-7 18-10 7-31 6-42-4S-3 26 8 11z" fill="#477a2c"/><path d="M7 11c20 6 36 14 51 26-2 12-14 19-27 17C10 52-4 32 7 11z" fill="#d9e2aa"/><path d="M8 12c19 6 33 13 47 24-4 10-12 15-24 14C14 48 2 30 8 12z" fill="#dc4857"/><path d="m13 20-1 2m-1 11-1 2m13-6-1 2m16-2-1 2m-17 14-1 2m20-3-1 2m9-6-1 2" stroke="#381d22" stroke-width="3" stroke-linecap="round"/></svg>
            <svg viewBox="0 0 62 62" role="img" aria-label="Pineapple"><use href="#i-pineapple"/></svg>
            <svg viewBox="0 0 62 62" role="img" aria-label="Strawberry"><path d="M4 23C13 13 28 8 42 10c10 2 12 12 11 23 0 12-4 24-11 28-16-1-37-10-38-25-1-5-2-9 0-13z" fill="url(#g-red)"/><path d="m3 20 5 5 8-5 8-1 6-6 8 1 3-6-5-2 1-6-6 8-5 1-4 8-5-3-7-11 4 15-12 3z" fill="#4d9340"/><g fill="#ffc58c"><circle cx="14" cy="24" r="1.500"/><circle cx="25" cy="20" r="1.500"/><circle cx="35" cy="17" r="1.500"/><circle cx="46" cy="18" r="1.500"/><circle cx="9" cy="33" r="1.500"/><circle cx="21" cy="31" r="1.500"/><circle cx="33" cy="27" r="1.500"/><circle cx="45" cy="29" r="1.500"/><circle cx="18" cy="43" r="1.500"/><circle cx="31" cy="39" r="1.500"/><circle cx="43" cy="40" r="1.500"/><circle cx="28" cy="50" r="1.500"/><circle cx="40" cy="50" r="1.500"/><circle cx="42" cy="57" r="1.500"/></g></svg>
            <svg viewBox="0 0 62 62" role="img" aria-label="Banana"><path d="M26 25c4-7 13-7 20-1 5 5 7 11 7 16-7-3-8-12-17-14l-13 8z" fill="#d8bd80"/><path d="M14 30c-1-10-5-25 2-29 7-2 9 12 6 31z" fill="#e4c79e"/><path d="m17 29 9-4c2 12 14 24 28 21 1 5-3 11-12 11C28 56 17 44 17 29z" fill="#edcb22"/><path d="M22 30c3 13 14 22 29 23" fill="none" stroke="#fff17a" stroke-width="3"/><path d="M3 30c5-3 12-2 14 0 1 12-1 26-4 31C6 58 3 44 3 30z" fill="#d7b98c"/><path d="M18 3c2 8 1 17 0 25M11 31v25M28 24c8-4 14 0 18 7" fill="none" stroke="#fae8bd" stroke-width="2"/></svg>
            <svg viewBox="0 0 62 62" role="img" aria-label="Cherries"><path d="M4 8c5 8 7 16 9 25M12 10c8 8 14 16 20 25" fill="none" stroke="#4c6a28" stroke-width="2"/><path d="M2 5c15-6 27-5 38 10-11 4-24 5-31 0z" fill="url(#g-leaf)"/><path d="M3 5c12 3 23 4 34 9" fill="none" stroke="#7aae5f"/><ellipse cx="39" cy="43" rx="16" ry="15" fill="url(#g-red)"/><ellipse cx="18" cy="46" rx="16" ry="15" fill="url(#g-red)"/><ellipse cx="18" cy="40" rx="7" ry="3" fill="#ff98a1"/></svg>
          </span></span>
          <svg class="chevron" viewBox="0 0 21 36" aria-hidden="true"><path d="m3 3 15 15L3 33"/></svg>
        </span></a></li>

      <li><a class="theme random" href="#random">
        <span class="count"><span class="number">10</span><span class="unit">Pairs</span></span>
        <span class="details">
          <span class="summary"><span class="name">Random</span>
          <span class="emojis">
            <svg viewBox="0 0 62 62" role="img" aria-label="DVD"><circle cx="31" cy="31" r="30" fill="url(#g-disc)"/><g opacity=".7"><path d="M31 31 7 12 15 5z" fill="#80c931"/><path d="m31 31 24 20-9 7z" fill="#80c931"/><path d="m31 31-8-29h11z" fill="#c595ac"/><path d="m31 31 8 29H28z" fill="#c595ac"/><path d="M31 31 1 29l3-11z" fill="#e48e3c"/><path d="m31 31 30-6-4 18z" fill="#e6d37a"/></g><circle cx="31" cy="31" r="14" fill="#81765a" opacity=".6"/><circle cx="31" cy="31" r="8" fill="#dfd8bf"/><circle cx="31" cy="31" r="5" fill="#1c1c1e"/></svg>
            <svg viewBox="0 0 62 62" role="img" aria-label="Laptop"><path d="M4 1h54l-2 31H6z" fill="#a7a7aa"/><path d="M6 2h50l-2 28H8z" fill="#050506"/><path d="M38 2h18l-2 27z" fill="#343437"/><path d="m6 32 50 0 5 29H1z" fill="#b3b4b6"/><path d="M7 33h48l2 13H5z" fill="#3a3a3d"/><path d="M7 36h48M6 40h50M5 43h52M13 33v13m7-13v13m7-13v13m7-13v13m7-13v13m8-13v13" stroke="#939397"/><path d="M17 47h28l2 11H15z" fill="#98999c"/><path d="M21 60h20v2H21z" fill="#77787b"/></svg>
            <svg viewBox="0 0 62 62" role="img" aria-label="Tangerine"><use href="#i-tangerine"/></svg>
            <svg viewBox="0 0 62 62" role="img" aria-label="Television"><rect x="2" y="1" width="59" height="59" rx="5" fill="#784837"/><path d="M7 58h8v4H7zm41 0h8v4h-8z" fill="#58382d"/><rect x="4" y="4" width="55" height="46" rx="4" fill="#beb39f"/><path d="M10 8c13-4 29-4 43 0 4 10 4 26 0 36-13 4-30 4-43 0-5-11-5-25 0-36z" fill="#1e2525"/><path d="M12 8c12-3 26-3 39 0 4 9 4 25 0 34-12 4-27 4-39 0-4-9-4-25 0-34z" fill="url(#g-screen)"/><path d="M20 52h25l3 6H17z" fill="#362b25"/><circle cx="10" cy="53" r="5" fill="#d7d0be"/><circle cx="53" cy="53" r="5" fill="#d7d0be"/></svg>
            <svg viewBox="0 0 62 62" role="img" aria-label="Mobile phone"><rect x="15" y="1" width="32" height="60" rx="4" fill="#050506" stroke="#929397" stroke-width="2"/><path d="M27 4h8" stroke="#303033" stroke-width="2"/><g stroke-width="4" stroke-dasharray="4 3"><path stroke="#66ca77" d="M19 10h24"/><path stroke="#42aae1" d="M19 17h24"/><path stroke="#eac153" d="M19 24h24"/><path stroke="#a765d8" d="M19 31h24"/><path stroke="#f0ece3" d="M19 38h24"/><path stroke="#e96157" d="M19 45h18"/><path stroke="#48cde2" d="M19 55h24"/></g><path d="M26 10h4m3 14h4M26 38h4m3 7h4M40 55h4" stroke="#fff" stroke-width="4"/><path d="M19 55h4M40 24h4" stroke="#69d27b" stroke-width="4"/></svg>
            <svg viewBox="0 0 62 62" role="img" aria-label="Alarm clock"><path d="m11 52-5 8m44-8 6 8M31 1v7M11 12l8 6m33-6-9 6" stroke="#a0a1a6" stroke-width="4" stroke-linecap="round"/><path d="M3 18C-2 7 14-5 21 5zM59 18C65 7 48-5 41 5z" fill="#ce303a"/><circle cx="31" cy="33" r="28" fill="#c52d37"/><circle cx="31" cy="33" r="23" fill="#eff1f1"/><path d="M31 14v5m0 29v5M12 33h5m28 0h5M22 17l2 4m16-4-2 4M15 23l4 3m28-3-4 3M15 43l4-3m28 3-4-3M22 49l2-4m16 4-2-4" stroke="#d95259" stroke-width="2"/><path d="m21 27 10 6 18-13" stroke="#29292b" stroke-width="2" fill="none"/><path d="M31 33v15" stroke="#b99760"/><circle cx="31" cy="33" r="2" fill="#957444"/></svg>
            <svg viewBox="0 0 62 62" role="img" aria-label="Snake"><use href="#i-snake"/></svg>
            <svg viewBox="0 0 62 62" role="img" aria-label="Pineapple"><use href="#i-pineapple"/></svg>
          </span></span>
          <svg class="chevron" viewBox="0 0 21 36" aria-hidden="true"><path d="m3 3 15 15L3 33"/></svg>
        </span></a></li>
    </ul>
  </main>

  <footer class="home"><div class="home-bar"></div></footer>
</div>
</body>
</html>
```

FILE: styles.css
```css
* {
  box-sizing: border-box;
}

body {
  margin: 0;
  background: #000;
  color: #fff;
  font-family: Inter, "Liberation Sans", sans-serif;
}

.defs {
  position: absolute;
}

.screen {
  min-height: 100vh;
  display: flex;
  flex-direction: column;
}

/* Status bar */
.status {
  display: flex;
  justify-content: space-between;
  align-items: center;
  height: 141px;
  padding: 7px 54px 0 93px;
}

.clock {
  font-size: 46px;
  font-weight: 600;
  line-height: 56px;
}

.indicators {
  display: flex;
  align-items: flex-end;
  gap: 17px;
}

.signal {
  width: 51px;
  height: 9px;
}

.wifi {
  width: 48px;
  height: 36px;
}

.battery {
  width: 76px;
  height: 36px;
}

/* Navigation bar */
.toolbar {
  display: flex;
  justify-content: space-between;
  align-items: center;
  height: 132px;
  padding: 0 48px 0 54px;
}

.tool {
  padding: 0;
  border: 0;
  background: none;
  color: #0a84ff;
  font: inherit;
  font-size: 50px;
  line-height: 60px;
}

.plus {
  display: block;
  width: 52px;
  height: 52px;
}

.heading {
  margin: 12px 48px 24px;
  font-size: 100px;
  font-weight: 700;
  line-height: 120px;
}

/* Theme list */
.themes {
  margin: 0 60px;
  padding: 0;
  list-style: none;
  background: #1c1c1e;
}

.theme {
  display: flex;
  min-height: 228px;
  color: inherit;
  text-decoration: none;
}

.count {
  display: flex;
  flex-direction: column;
  justify-content: center;
  width: 168px;
  padding-left: 40px;
  text-align: center;
}

.number {
  font-size: 82px;
  line-height: 100px;
}

.unit {
  font-size: 50px;
  line-height: 60px;
}

.details {
  flex: 1;
  display: flex;
  justify-content: space-between;
  align-items: center;
  padding: 0 51px 0 17px;
  border-bottom: 1px solid #3d3d40;
}

li:last-child .details {
  border-bottom-color: transparent;
}

.summary {
  display: flex;
  flex-direction: column;
  gap: 1px;
  padding-bottom: 26px;
}

.name {
  font-size: 58px;
  line-height: 70px;
}

.emojis {
  display: flex;
  gap: 7px;
  padding-left: 2px;
}

.emojis svg {
  width: 62px;
  height: 62px;
}

.chevron {
  width: 21px;
  height: 36px;
  fill: none;
  stroke: #5a5a5e;
  stroke-width: 6px;
  stroke-linecap: round;
  stroke-linejoin: round;
}

.halloween .name { color: #ff9500; }
.animal .name { color: #af52de; }
.sport .name { color: #34c759; }
.food .name { color: #ffcc00; }
.weather .name,
.random .name { color: #007aff; }
.fruit .name { color: #ff2d55; }

/* Home indicator */
.home {
  margin-top: auto;
  padding: 24px;
}

.home-bar {
  width: 37%;
  min-width: 417px;
  height: 15px;
  margin: 0 auto;
  border-radius: 8px;
  background: #4d4d4d;
}
```
